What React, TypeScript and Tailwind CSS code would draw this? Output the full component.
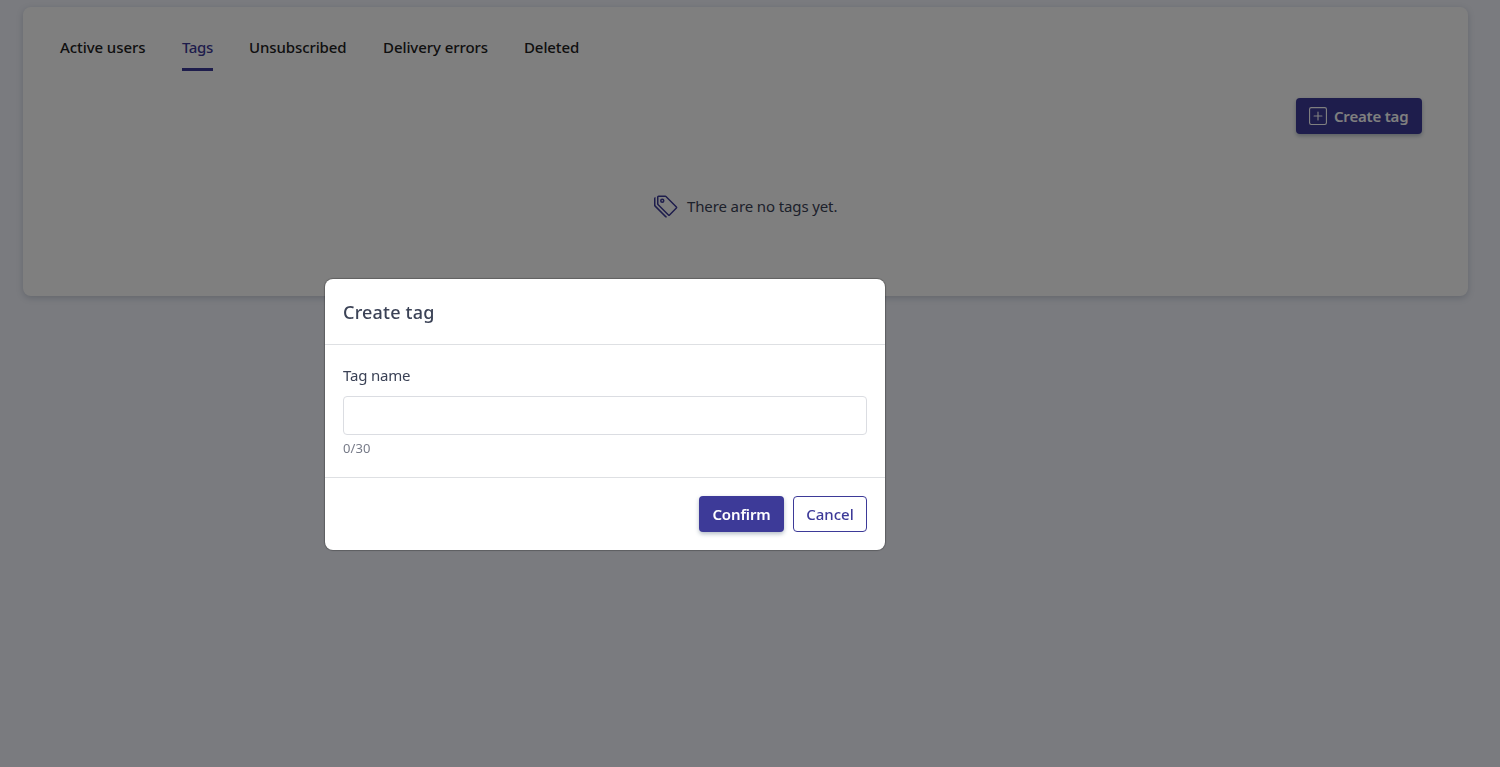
import React, { useState } from "react";
import { BsPlusSquare, BsTags } from "react-icons/bs";

const MAX_LENGTH = 30;

const tabs = [
  { label: "Active users", width: "w-[86px]", spacing: "tracking-[-0.08px]" },
  { label: "Tags", width: "w-[31px]", spacing: "tracking-[-0.4px]" },
  { label: "Unsubscribed", width: "w-[98px]", spacing: "tracking-[-0.1px]" },
  { label: "Delivery errors", width: "w-[105px]", spacing: "tracking-[-0.08px]" },
  { label: "Deleted", width: "w-[56px]", spacing: "tracking-[-0.1px]" },
];

export default function App() {
  const [active, setActive] = useState("Tags");
  const [open, setOpen] = useState(true);

  return (
    <div className="h-screen overflow-hidden bg-[#f4f6fe] pt-[7px] pr-8 pl-[23px] font-['Noto_Sans',sans-serif] text-[#3b4256]">
      <main className="h-[289px] rounded-lg bg-white pt-6 pr-[46px] pl-[37px] shadow-[0_2px_6px_rgba(67,89,113,0.25)]">
        <nav className="flex gap-9">
          {tabs.map((tab) => (
            <button
              key={tab.label}
              onClick={() => setActive(tab.label)}
              className={`h-10 border-b-3 pb-[7px] text-left text-[15px] leading-8 font-medium whitespace-nowrap ${tab.width} ${tab.spacing} ${
                active === tab.label ? "border-[#3d3a98] text-[#3d3a98]" : "border-transparent text-[#212121]"
              }`}
            >
              {tab.label}
            </button>
          ))}
        </nav>

        <div className="mt-[27px] flex justify-end">
          <button
            onClick={() => setOpen(true)}
            className="flex h-9 w-[126px] items-center gap-[7px] rounded bg-[#3d3a98] pl-[13px] text-[15px] font-semibold tracking-[-0.2px] whitespace-nowrap text-white shadow-[0_2px_4px_rgba(67,89,113,0.4)]"
          >
            <BsPlusSquare className="size-[18px] shrink-0" />
            Create tag
          </button>
        </div>

        <div className="mt-[58px] flex h-7 items-center gap-[9px] pl-[594px]">
          <BsTags className="size-6 text-[#3d3a98]" />
          <span className="text-[15px] tracking-[-0.12px] whitespace-nowrap">There are no tags yet.</span>
        </div>
      </main>

      {open && <CreateTagModal onClose={() => setOpen(false)} />}
    </div>
  );
}

const CreateTagModal = ({ onClose }: { onClose: () => void }) => {
  const [name, setName] = useState("");

  return (
    <div className="fixed inset-0 bg-black/50 pt-[279px] pl-[325px]">
      <div role="dialog" className="h-[271px] w-[560px] rounded-lg bg-white shadow-[0_0_1px_1px_rgba(0,0,0,0.25)]">
        <div className="flex h-[66px] items-center border-b border-[#dee0e3] px-[18px] pt-px">
          <h2 className="text-[18px] font-medium tracking-[0.2px]">Create tag</h2>
        </div>

        <div className="h-[132px] px-[18px] pt-[18px]">
          <label htmlFor="tag-name" className="block h-6 text-[15px] leading-6 tracking-[-0.2px]">
            Tag name
          </label>
          <input
            id="tag-name"
            value={name}
            maxLength={MAX_LENGTH}
            onChange={(e) => setName(e.target.value)}
            className="mt-[9px] block h-[39px] w-full rounded border border-[#dbdde2] px-3 outline-none"
          />
          <div className="mt-[3px] text-[13px] leading-5 tracking-[0.1px] text-[#777b88]">
            {name.length}/{MAX_LENGTH}
          </div>
        </div>

        <div className="flex h-[73px] items-start justify-end gap-[9px] border-t border-[#dee0e3] px-[18px] pt-[18px] text-[15px] whitespace-nowrap">
          <button
            onClick={onClose}
            className="h-9 w-[85px] rounded bg-[#3d3a98] font-semibold tracking-[-0.15px] text-white shadow-[0_2px_4px_rgba(67,89,113,0.4)]"
          >
            Confirm
          </button>
          <button
            onClick={onClose}
            className="h-9 w-[74px] rounded border border-[#3d3a98] font-medium text-[#3d3a98]"
          >
            Cancel
          </button>
        </div>
      </div>
    </div>
  );
};
